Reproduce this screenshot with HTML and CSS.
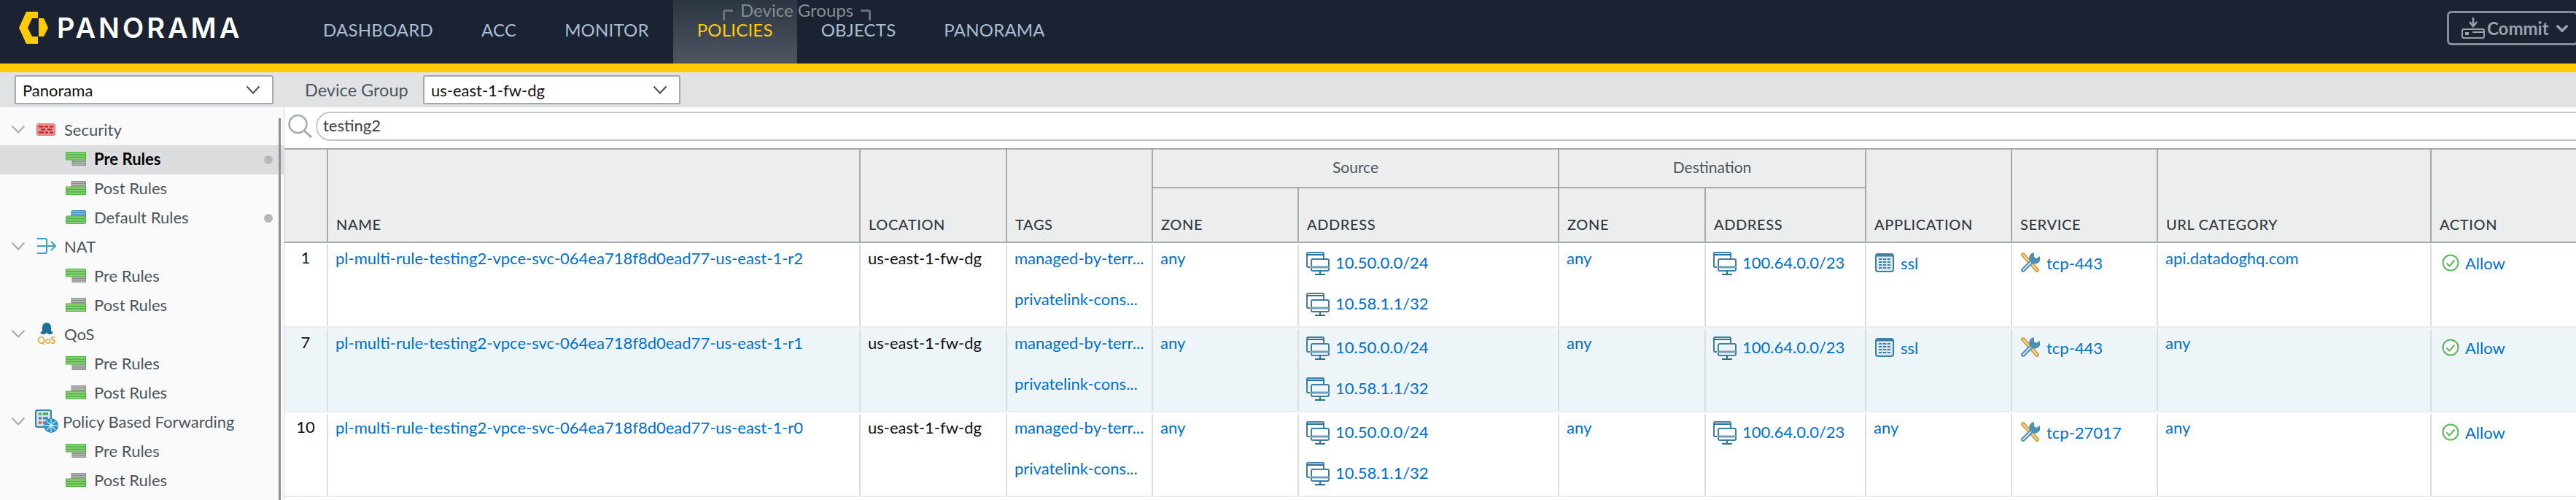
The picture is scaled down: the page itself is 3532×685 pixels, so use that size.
FILE: index.html
```html
<!DOCTYPE html>
<html lang="en">
<head>
    <meta charset="UTF-8">
    <meta name="viewport" content="width=device-width, initial-scale=1.0">
    <title>Panorama</title>
    <link rel="stylesheet" href="styles.css">
</head>
<body>
    <svg class="defs" width="0" height="0">
        <symbol id="pre" viewBox="0 0 28 19">
            <rect x="9" y="10" width="18.500" height="8.500" fill="#b4b4b4" stroke="#8f8f8f"/>
            <path d="M9 13.500h18M9 16h18" stroke="#8a8a8a"/>
            <rect x="0.500" y="0.500" width="27" height="10.500" fill="#8bd07a" stroke="#4eae3e"/>
            <path d="M1 4h26M1 7.500h26" stroke="#4eae3e" stroke-width="1.400"/>
        </symbol>
        <symbol id="post" viewBox="0 0 28 19">
            <rect x="8" y="0.500" width="19.500" height="9" fill="#b4b4b4" stroke="#8f8f8f"/>
            <path d="M8 3.500h19M8 6.500h19" stroke="#8a8a8a"/>
            <rect x="0.500" y="8" width="27" height="10.500" fill="#8bd07a" stroke="#4eae3e"/>
            <path d="M1 11.500h26M1 15h26" stroke="#4eae3e" stroke-width="1.400"/>
        </symbol>
        <symbol id="default" viewBox="0 0 28 19">
            <rect x="8" y="0.500" width="19.500" height="9" rx="1.500" fill="#7fb3d6" stroke="#3a86b7"/>
            <path d="M8 3.500h19M8 6.500h19" stroke="#3a86b7"/>
            <rect x="0.500" y="8" width="27" height="10.500" rx="1.500" fill="#8bd07a" stroke="#4eae3e"/>
            <path d="M1 11.500h26M1 15h26" stroke="#4eae3e" stroke-width="1.400"/>
        </symbol>
        <symbol id="monitor" viewBox="0 0 32 32">
            <path d="M5 21H2.500A1.500 1.500 0 0 1 1 19.500V2.500A1.500 1.500 0 0 1 2.500 1h20A1.500 1.500 0 0 1 24 2.500V9" fill="none" stroke="#3f7fa3" stroke-width="2"/>
            <path d="M1 4h23" stroke="#2a6f96" stroke-width="2"/>
            <rect x="7" y="10" width="24" height="16" rx="2" fill="none" stroke="#3f7fa3" stroke-width="2"/>
            <path d="M7 21h24" stroke="#6f9fbb" stroke-width="3"/>
            <path d="M19 26v5M12 31h14" stroke="#2a6f96" stroke-width="2"/>
        </symbol>
        <symbol id="app" viewBox="0 0 26 26">
            <rect x="1" y="1" width="24" height="24" rx="3" fill="#dcebf3" stroke="#3f7fa3" stroke-width="2"/>
            <path d="M1 3h24" stroke="#3f7fa3" stroke-width="3"/>
            <path d="M5 8h16M5 12h16M5 16h16M5 20h16" stroke="#3f7fa3" stroke-width="2"/>
            <path d="M10 7v14M16 7v14" stroke="#dcebf3" stroke-width="1.500"/>
        </symbol>
        <symbol id="service" viewBox="0 0 28 28">
            <path d="M5 3l19 21" stroke="#d2a94f" stroke-width="6" stroke-linecap="round"/>
            <path d="M5 3l19 21" stroke="#f4e3b6" stroke-width="1.600" stroke-linecap="round"/>
            <path d="M19 10L5 24" stroke="#4f8fb3" stroke-width="6" stroke-linecap="round"/>
            <path d="M19 10L5 24" stroke="#d6e7f1" stroke-width="1.800" stroke-linecap="round"/>
            <path d="M20 0a7.500 7.500 0 0 0-6 11a7.500 7.500 0 0 0 14-6l-5 3l-3-2z" fill="#4f8fb3"/>
        </symbol>
        <symbol id="allow" viewBox="0 0 24 24">
            <circle cx="12" cy="12" r="10.500" fill="#fff" stroke="#5cb85c" stroke-width="2"/>
            <path d="M6.500 12.500l4 4l7-8" fill="none" stroke="#5cb85c" stroke-width="2"/>
        </symbol>
        <symbol id="chev" viewBox="0 0 20 12">
            <path d="M1.500 1.500L10 10.500L18.500 1.500" fill="none" stroke="currentColor" stroke-width="2.200"/>
        </symbol>
    </svg>

    <header class="topbar">
        <div class="logo">
            <svg class="logo-mark" width="40" height="44" viewBox="0 0 40 44">
                <path d="M10 0h16v9h-8l-6 13l6 12h8v10H10L0 22z" fill="#ffcb05"/>
                <path d="M27 9h7l6 13l-6 12h-7z" fill="#ffcb05"/>
            </svg>
            <span class="logo-text">PANORAMA</span>
        </div>
        <nav class="nav">
            <a class="nav-item">DASHBOARD</a>
            <a class="nav-item">ACC</a>
            <a class="nav-item">MONITOR</a>
            <a class="nav-item active">POLICIES</a>
            <a class="nav-item">OBJECTS</a>
            <a class="nav-item">PANORAMA</a>
            <div class="nav-group">
                <svg width="15" height="15" viewBox="0 0 15 15"><path d="M1.500 15V3.500q0-2 2-2H14" fill="none" stroke="#6d737b" stroke-width="3"/></svg>
                <span>Device Groups</span>
                <svg width="15" height="15" viewBox="0 0 15 15"><path d="M13.500 15V3.500q0-2-2-2H1" fill="none" stroke="#6d737b" stroke-width="3"/></svg>
            </div>
        </nav>
        <button class="commit">
            <svg width="32" height="30" viewBox="0 0 32 30">
                <path d="M16 0v10M11 6l5 6l5-6" fill="none" stroke="#9aa1ab" stroke-width="2.500"/>
                <path d="M2 16h9M21 16h9" stroke="#9aa1ab" stroke-width="2"/>
                <rect x="1" y="16" width="30" height="12" rx="2" fill="none" stroke="#9aa1ab" stroke-width="2"/>
                <rect x="5" y="20" width="5" height="4" fill="#9aa1ab"/>
                <path d="M15 20h16" stroke="#9aa1ab" stroke-width="2"/>
            </svg>
            <span>Commit</span>
            <svg class="commit-chev" width="18" height="11" viewBox="0 0 20 12"><path d="M2 2l8 8l8-8" fill="none" stroke="#9aa1ab" stroke-width="4"/></svg>
        </button>
    </header>
    <div class="accent"></div>

    <div class="toolbar">
        <div class="select select-context">
            <span>Panorama</span>
            <svg width="20" height="12"><use href="#chev"/></svg>
        </div>
        <label class="toolbar-label">Device Group</label>
        <div class="select select-group">
            <span>us-east-1-fw-dg</span>
            <svg width="20" height="12"><use href="#chev"/></svg>
        </div>
    </div>

    <div class="main">
        <aside class="sidebar">
            <div class="scrollbar"></div>
            <div class="tree-row">
                <svg class="tree-chev" width="20" height="12"><use href="#chev"/></svg>
                <svg class="tree-icon" width="26" height="17" viewBox="0 0 28 17">
                    <rect x="0.500" y="0.500" width="25" height="16" rx="2.500" fill="#e28f8f" stroke="#d67a7a"/>
                    <path d="M3 4.500h6M11 4.500h5M18 4.500h5M6 8.500h6M15 8.500h6M3 12.500h7M12 12.500h4M18 12.500h5" stroke="#bb2020" stroke-width="2.200"/>
                </svg>
                <span>Security</span>
            </div>
            <div class="tree-row sub selected">
                <svg class="rule-icon"><use href="#pre"/></svg><span>Pre Rules</span><i class="dot"></i>
            </div>
            <div class="tree-row sub">
                <svg class="rule-icon"><use href="#post"/></svg><span>Post Rules</span>
            </div>
            <div class="tree-row sub">
                <svg class="rule-icon"><use href="#default"/></svg><span>Default Rules</span><i class="dot"></i>
            </div>
            <div class="tree-row">
                <svg class="tree-chev" width="20" height="12"><use href="#chev"/></svg>
                <svg class="tree-icon" width="28" height="24" viewBox="0 0 28 24">
                    <path d="M1 2h11q2 0 2 2v16q0 2-2 2H1M1 12h25M20 6l6 6l-6 6" fill="none" stroke="#3ba0d0" stroke-width="2"/>
                </svg>
                <span>NAT</span>
            </div>
            <div class="tree-row sub">
                <svg class="rule-icon"><use href="#pre"/></svg><span>Pre Rules</span>
            </div>
            <div class="tree-row sub">
                <svg class="rule-icon"><use href="#post"/></svg><span>Post Rules</span>
            </div>
            <div class="tree-row">
                <svg class="tree-chev" width="20" height="12"><use href="#chev"/></svg>
                <svg class="tree-icon" width="28" height="30" viewBox="0 0 28 30">
                    <path d="M14 0a6 6 0 0 1 6 6v5l3 3l-3 2h-3l-3-2l-3 2H8l-3-2l3-3V6a6 6 0 0 1 6-6z" fill="#1f6f9c"/>
                    <text x="14" y="29" text-anchor="middle" class="qos-mark">QoS</text>
                </svg>
                <span>QoS</span>
            </div>
            <div class="tree-row sub">
                <svg class="rule-icon"><use href="#pre"/></svg><span>Pre Rules</span>
            </div>
            <div class="tree-row sub">
                <svg class="rule-icon"><use href="#post"/></svg><span>Post Rules</span>
            </div>
            <div class="tree-row">
                <svg class="tree-chev" width="20" height="12"><use href="#chev"/></svg>
                <svg class="tree-icon pbf" width="32" height="32" viewBox="0 0 32 32">
                    <rect x="1" y="1" width="21" height="23" rx="2" fill="#cfe0ea" stroke="#3f7fa3" stroke-width="2"/>
                    <path d="M5 6h4M11 6h7" stroke="#3fae3f" stroke-width="3"/>
                    <path d="M5 12h4M11 12h7" stroke="#3f7fa3" stroke-width="3"/>
                    <path d="M5 18h4M11 18h7" stroke="#d04a4a" stroke-width="3"/>
                    <circle cx="22" cy="22" r="10" fill="#2e8fc4"/>
                    <path d="M22 13v18M13 22h18M16 16l12 12M28 16L16 28" stroke="#cfe6f3" stroke-width="1.300"/>
                </svg>
                <span>Policy Based Forwarding</span>
            </div>
            <div class="tree-row sub">
                <svg class="rule-icon"><use href="#pre"/></svg><span>Pre Rules</span>
            </div>
            <div class="tree-row sub">
                <svg class="rule-icon"><use href="#post"/></svg><span>Post Rules</span>
            </div>
            <div class="tree-row">
                <svg class="tree-chev" width="20" height="12"><use href="#chev"/></svg>
                <svg class="tree-icon next-icon" width="26" height="26" viewBox="0 0 26 26"><circle cx="13" cy="13" r="11" fill="none" stroke="#e3bb5a" stroke-width="3"/></svg>
            </div>
        </aside>

        <section class="content">
            <div class="search">
                <svg width="34" height="32" viewBox="0 0 34 32">
                    <circle cx="13.500" cy="13" r="12" fill="none" stroke="#a4abaf" stroke-width="2.500"/>
                    <path d="M22 22l10 9" stroke="#a4abaf" stroke-width="3"/>
                </svg>
                <input class="search-input" type="text" value="testing2">
            </div>

            <table class="rules">
                <colgroup>
                    <col class="c-num"><col class="c-name"><col class="c-201"><col class="c-200"><col class="c-200"><col class="c-357"><col class="c-201"><col class="c-220"><col class="c-200"><col class="c-200"><col class="c-375"><col class="c-200">
                </colgroup>
                <thead>
                    <tr class="group-row">
                        <th rowspan="2" class="first"></th>
                        <th rowspan="2">NAME</th>
                        <th rowspan="2">LOCATION</th>
                        <th rowspan="2">TAGS</th>
                        <th colspan="2" class="group">Source</th>
                        <th colspan="2" class="group">Destination</th>
                        <th rowspan="2">APPLICATION</th>
                        <th rowspan="2">SERVICE</th>
                        <th rowspan="2">URL CATEGORY</th>
                        <th rowspan="2">ACTION</th>
                    </tr>
                    <tr class="label-row">
                        <th>ZONE</th>
                        <th>ADDRESS</th>
                        <th>ZONE</th>
                        <th>ADDRESS</th>
                    </tr>
                </thead>
                <tbody>
                    <tr>
                        <td><div class="cell first num">1</div></td>
                        <td><div class="cell"><a class="line">pl-multi-rule-testing2-vpce-svc-064ea718f8d0ead77-us-east-1-r2</a></div></td>
                        <td><div class="cell"><span class="line black">us-east-1-fw-dg</span></div></td>
                        <td><div class="cell"><a class="line tag">managed-by-terr...</a><a class="line tag">privatelink-cons...</a></div></td>
                        <td><div class="cell"><a class="line">any</a></div></td>
                        <td><div class="cell"><a class="addr"><svg width="32" height="32"><use href="#monitor"/></svg>10.50.0.0/24</a><a class="addr"><svg width="32" height="32"><use href="#monitor"/></svg>10.58.1.1/32</a></div></td>
                        <td><div class="cell"><a class="line">any</a></div></td>
                        <td><div class="cell"><a class="addr"><svg width="32" height="32"><use href="#monitor"/></svg>100.64.0.0/23</a></div></td>
                        <td><div class="cell"><a class="iconed app"><svg width="26" height="26"><use href="#app"/></svg>ssl</a></div></td>
                        <td><div class="cell"><a class="iconed"><svg width="28" height="28"><use href="#service"/></svg>tcp-443</a></div></td>
                        <td><div class="cell"><a class="line">api.datadoghq.com</a></div></td>
                        <td><div class="cell"><a class="iconed allow"><svg width="24" height="24"><use href="#allow"/></svg>Allow</a></div></td>
                    </tr>
                    <tr class="alt">
                        <td><div class="cell first num">7</div></td>
                        <td><div class="cell"><a class="line">pl-multi-rule-testing2-vpce-svc-064ea718f8d0ead77-us-east-1-r1</a></div></td>
                        <td><div class="cell"><span class="line black">us-east-1-fw-dg</span></div></td>
                        <td><div class="cell"><a class="line tag">managed-by-terr...</a><a class="line tag">privatelink-cons...</a></div></td>
                        <td><div class="cell"><a class="line">any</a></div></td>
                        <td><div class="cell"><a class="addr"><svg width="32" height="32"><use href="#monitor"/></svg>10.50.0.0/24</a><a class="addr"><svg width="32" height="32"><use href="#monitor"/></svg>10.58.1.1/32</a></div></td>
                        <td><div class="cell"><a class="line">any</a></div></td>
                        <td><div class="cell"><a class="addr"><svg width="32" height="32"><use href="#monitor"/></svg>100.64.0.0/23</a></div></td>
                        <td><div class="cell"><a class="iconed app"><svg width="26" height="26"><use href="#app"/></svg>ssl</a></div></td>
                        <td><div class="cell"><a class="iconed"><svg width="28" height="28"><use href="#service"/></svg>tcp-443</a></div></td>
                        <td><div class="cell"><a class="line">any</a></div></td>
                        <td><div class="cell"><a class="iconed allow"><svg width="24" height="24"><use href="#allow"/></svg>Allow</a></div></td>
                    </tr>
                    <tr>
                        <td><div class="cell first num">10</div></td>
                        <td><div class="cell"><a class="line">pl-multi-rule-testing2-vpce-svc-064ea718f8d0ead77-us-east-1-r0</a></div></td>
                        <td><div class="cell"><span class="line black">us-east-1-fw-dg</span></div></td>
                        <td><div class="cell"><a class="line tag">managed-by-terr...</a><a class="line tag">privatelink-cons...</a></div></td>
                        <td><div class="cell"><a class="line">any</a></div></td>
                        <td><div class="cell"><a class="addr"><svg width="32" height="32"><use href="#monitor"/></svg>10.50.0.0/24</a><a class="addr"><svg width="32" height="32"><use href="#monitor"/></svg>10.58.1.1/32</a></div></td>
                        <td><div class="cell"><a class="line">any</a></div></td>
                        <td><div class="cell"><a class="addr"><svg width="32" height="32"><use href="#monitor"/></svg>100.64.0.0/23</a></div></td>
                        <td><div class="cell"><a class="line">any</a></div></td>
                        <td><div class="cell"><a class="iconed"><svg width="28" height="28"><use href="#service"/></svg>tcp-27017</a></div></td>
                        <td><div class="cell"><a class="line">any</a></div></td>
                        <td><div class="cell"><a class="iconed allow"><svg width="24" height="24"><use href="#allow"/></svg>Allow</a></div></td>
                    </tr>
                </tbody>
            </table>
        </section>
    </div>
</body>
</html>
```

FILE: styles.css
```css
* {
    box-sizing: border-box;
}

html, body {
    margin: 0;
    padding: 0;
    height: 685px;
    overflow: hidden;
}

body {
    font-family: Lato, "Noto Sans", sans-serif;
    font-size: 22px;
    background-color: #fff;
    color: #4a5560;
}

.defs {
    display: block;
    height: 0;
}

/* top bar */
.topbar {
    display: flex;
    height: 87px;
    background-color: #1b2332;
    position: relative;
    overflow: hidden;
}

.logo {
    display: flex;
    width: 410px;
    padding: 16px 0 0 26px;
}

.logo-mark {
    flex: none;
}

.logo-text {
    margin-left: 12px;
    margin-top: 1px;
    font-family: Inter, sans-serif;
    font-weight: 600;
    font-size: 38px;
    line-height: 42px;
    letter-spacing: 4px;
    color: #fff;
}

.nav {
    display: flex;
    position: relative;
}

.nav-item {
    padding: 26px 33px 0;
    font-size: 24px;
    line-height: 29px;
    letter-spacing: 0.2px;
    color: #a9bdd2;
}

.nav-item.active {
    color: #ffcb05;
    background: linear-gradient(#2c3542, #4d5661);
}

.nav-group {
    position: absolute;
    top: 0;
    left: 581px;
    display: flex;
    align-items: flex-start;
    gap: 9px;
    font-size: 24px;
    line-height: 28px;
    color: #868c94;
}

.nav-group svg {
    margin-top: 13px;
}

.commit {
    position: absolute;
    top: 15px;
    left: 3355px;
    width: 180px;
    height: 47px;
    display: flex;
    align-items: center;
    padding: 0 0 0 17px;
    background: transparent;
    border: 3px solid #858d99;
    border-radius: 6px;
    font-family: inherit;
    font-weight: bold;
    font-size: 24px;
    color: #9aa1ab;
}

.commit span {
    margin-left: 3px;
}

.commit-chev {
    margin-left: 9px;
}

.accent {
    height: 12px;
    background-color: #ffcb05;
}

/* device group toolbar */
.toolbar {
    display: flex;
    align-items: center;
    height: 48px;
    padding-left: 20px;
    background-color: #e1e2e4;
}

.select {
    display: flex;
    align-items: center;
    justify-content: space-between;
    height: 40px;
    padding: 0 16px 0 9px;
    background-color: #fff;
    border: 2px solid #a5a8ac;
    border-radius: 3px;
    color: #111;
}

.select svg {
    color: #555;
}

.select-context {
    width: 355px;
}

.select-group {
    width: 353px;
}

.toolbar-label {
    flex: none;
    width: 162px;
    margin-left: 43px;
    font-size: 23.5px;
    color: #4a5560;
}

/* left tree */
.main {
    display: flex;
    height: 538px;
}

.sidebar {
    flex: none;
    position: relative;
    width: 390px;
    padding-top: 12px;
    background-color: #fafafa;
    border-right: 1px solid #d5d6d8;
    overflow: hidden;
}

.scrollbar {
    position: absolute;
    top: 15px;
    bottom: 0;
    left: 382px;
    width: 3px;
    background-color: #8d8f92;
}

.tree-row {
    display: flex;
    align-items: center;
    height: 40px;
    padding-left: 15px;
    padding-bottom: 4px;
    white-space: nowrap;
}

.tree-row.sub {
    padding-left: 90px;
}

.tree-row.selected {
    background-color: #dcddde;
    color: #000;
    font-weight: bold;
}

.tree-chev {
    color: #a8acaf;
    margin-right: 15px;
    flex: none;
}

.tree-icon {
    flex: none;
    width: 28px;
    margin-right: 10px;
}

.tree-icon.pbf {
    width: 32px;
    margin: 0 6px 0 -2px;
}

.next-icon {
    margin-top: 14px;
}

.qos-mark {
    font-family: Lato, sans-serif;
    font-weight: bold;
    font-size: 13px;
    fill: #e0ad45;
}

.rule-icon {
    flex: none;
    width: 28px;
    height: 19px;
    margin-right: 11px;
}

.dot {
    margin-left: auto;
    margin-right: 15px;
    margin-top: 4px;
    width: 12px;
    height: 12px;
    border-radius: 50%;
    background-color: #b8b8b8;
}

/* search and table */
.content {
    flex: 1;
    min-width: 0;
    padding-top: 6px;
    overflow: hidden;
}

.search {
    display: flex;
    align-items: center;
    height: 40px;
    margin-bottom: 10px;
    padding-left: 5px;
}

.search svg {
    flex: none;
    margin-right: 4px;
}

.search-input {
    flex: 1;
    height: 40px;
    margin-right: -40px;
    padding: 0 0 3px 8px;
    border: 2px solid #c4c7ca;
    border-radius: 20px;
    font-family: inherit;
    font-size: 22px;
    color: #39434c;
    outline: none;
}

.rules {
    width: 3142px;
    table-layout: fixed;
    border-collapse: separate;
    border-spacing: 0;
    border-top: 2px solid #a5a8ac;
}

.c-num { width: 58px; }
.c-name { width: 730px; }
.c-200 { width: 200px; }
.c-201 { width: 201px; }
.c-220 { width: 220px; }
.c-357 { width: 357px; }
.c-375 { width: 375px; }

.rules th {
    padding: 0 0 12px 11px;
    background-color: #eceeed;
    border-left: 2px solid #a5a8ac;
    border-bottom: 2px solid #a5a8ac;
    vertical-align: bottom;
    text-align: left;
    font-size: 20px;
    font-weight: 500;
    line-height: 24px;
    letter-spacing: 0.6px;
    color: #333b42;
}

.rules th.first {
    border-left: 0;
}

.rules th.group {
    height: 53px;
    padding: 0 0 15px;
    text-align: center;
    font-size: 21px;
    font-weight: 400;
    letter-spacing: 0;
    color: #4a5560;
}

.label-row th {
    height: 75px;
}

.rules td {
    height: 116px;
    padding: 2px 0 0;
    border-bottom: 2px solid #eceeed;
    vertical-align: top;
}

.alt td {
    background-color: #edf5f8;
}

.cell {
    height: 112px;
    padding: 4px 0 0 10px;
    border-left: 2px solid #dcdddf;
    color: #0070cc;
    white-space: nowrap;
    overflow: hidden;
}

.cell.first {
    border-left: 0;
}

.cell.num {
    padding-left: 0;
    text-align: center;
    color: #111;
}

.line {
    display: block;
    height: 29px;
    line-height: 29px;
}

.black {
    color: #111;
}

.line.tag {
    height: 56px;
}

.addr {
    display: flex;
    align-items: flex-start;
    height: 32px;
    margin: 6px 0 24px;
    line-height: 30px;
}

.addr svg {
    flex: none;
    margin-right: 8px;
}

.iconed {
    display: flex;
    align-items: center;
    height: 42px;
    gap: 9px;
}

.iconed.app {
    padding-left: 2px;
}

.iconed.allow {
    padding-left: 4px;
    gap: 8px;
}
```
